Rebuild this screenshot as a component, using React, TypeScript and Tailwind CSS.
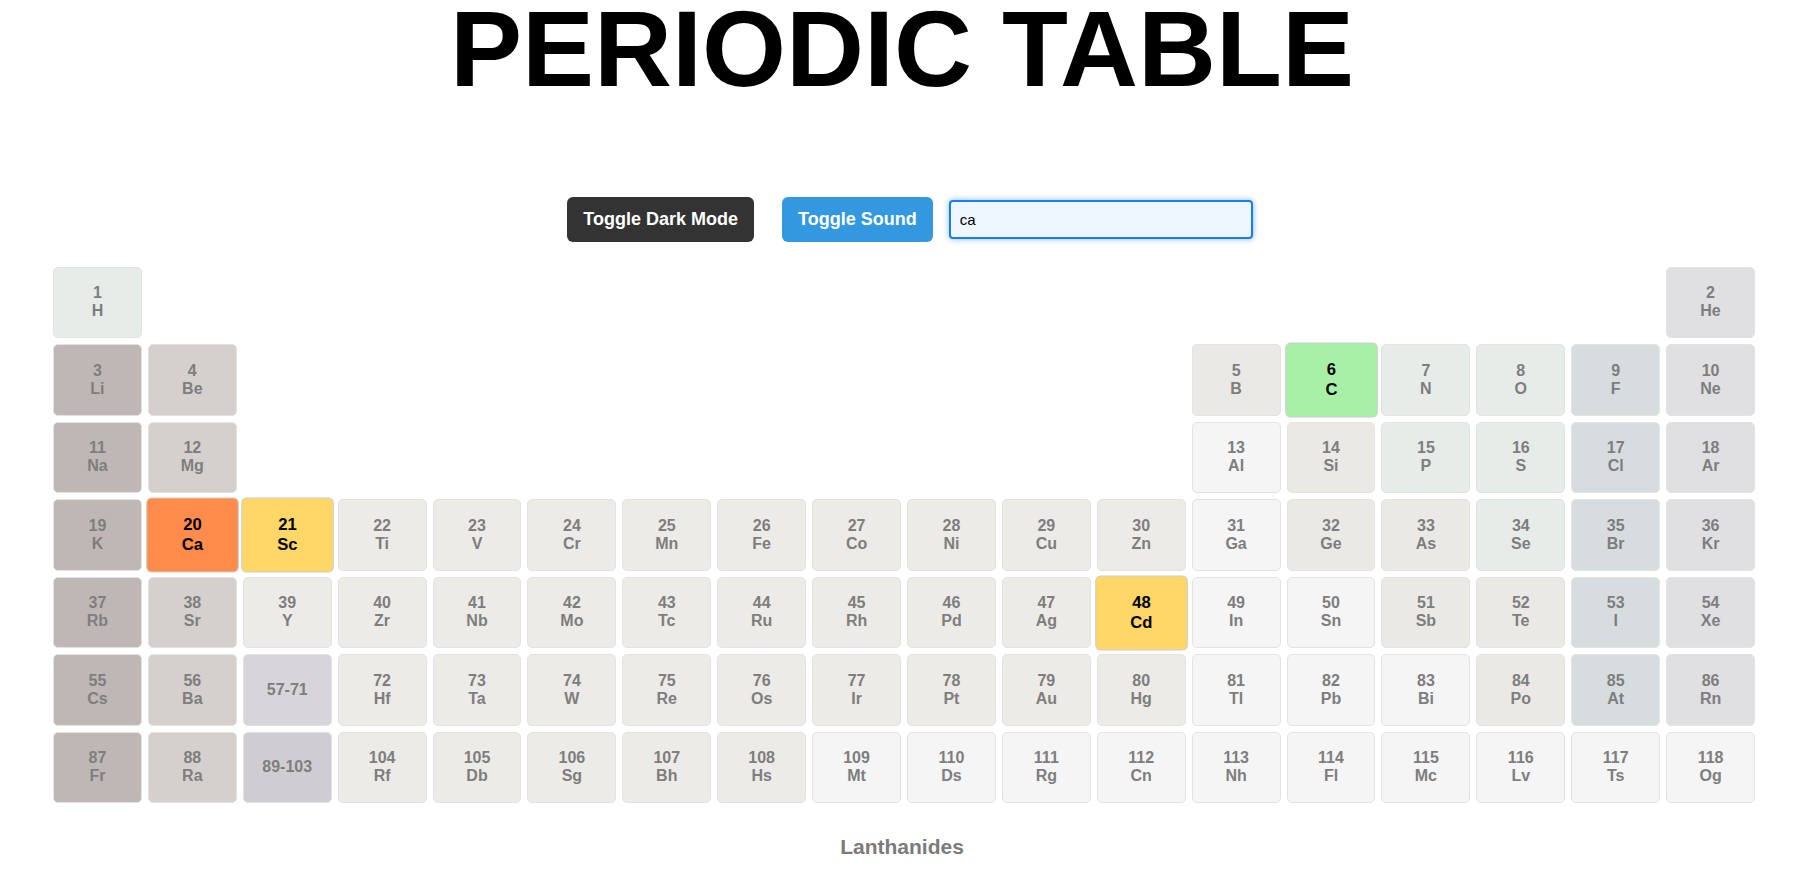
type Cat =
  | "alkali"
  | "alkaline"
  | "transition"
  | "post"
  | "metalloid"
  | "nonmetal"
  | "halogen"
  | "noble"
  | "unknown"
  | "lan"
  | "act";

type Cell = { n: string; s?: string; cat: Cat };

// cores esmaecidas (fora da busca)
const faded: Record<Cat, string> = {
  alkali: "bg-[#bfb7b6]",
  alkaline: "bg-[#d5d0cd]",
  transition: "bg-[#ecebe7]",
  post: "bg-[#f5f5f5]",
  metalloid: "bg-[#ebe9e6]",
  nonmetal: "bg-[#e8ece9]",
  halogen: "bg-[#d7dcdf]",
  noble: "bg-[#e0dfe1]",
  unknown: "bg-[#f5f5f5]",
  lan: "bg-[#d7d5d9]",
  act: "bg-[#cfcdd2]",
};

// cores cheias (resultado da busca)
const full: Partial<Record<Cat, string>> = {
  nonmetal: "bg-[#a8f0a8]",
  alkaline: "bg-[#ff8c4a]",
  transition: "bg-[#fed766]",
};

const symbols =
  "H He Li Be B C N O F Ne Na Mg Al Si P S Cl Ar K Ca Sc Ti V Cr Mn Fe Co Ni Cu Zn Ga Ge As Se Br Kr Rb Sr Y Zr Nb Mo Tc Ru Rh Pd Ag Cd In Sn Sb Te I Xe Cs Ba La Ce Pr Nd Pm Sm Eu Gd Tb Dy Ho Er Tm Yb Lu Hf Ta W Re Os Ir Pt Au Hg Tl Pb Bi Po At Rn Fr Ra Ac Th Pa U Np Pu Am Cm Bk Cf Es Fm Md No Lr Rf Db Sg Bh Hs Mt Ds Rg Cn Nh Fl Mc Lv Ts Og".split(
    " "
  );

function categoria(z: number): Cat {
  if ([3, 11, 19, 37, 55, 87].includes(z)) return "alkali";
  if ([4, 12, 20, 38, 56, 88].includes(z)) return "alkaline";
  if ([1, 6, 7, 8, 15, 16, 34].includes(z)) return "nonmetal";
  if ([9, 17, 35, 53, 85].includes(z)) return "halogen";
  if ([2, 10, 18, 36, 54, 86].includes(z)) return "noble";
  if ([5, 14, 32, 33, 51, 52, 84].includes(z)) return "metalloid";
  if ([13, 31, 49, 50, 81, 82, 83].includes(z)) return "post";
  if (z >= 109) return "unknown";
  return "transition";
}

const matches = [6, 20, 21, 48];

function el(z: number): Cell {
  return { n: String(z), s: symbols[z - 1], cat: categoria(z) };
}

function range(a: number, b: number) {
  const out: Cell[] = [];
  for (let i = a; i <= b; i++) out.push(el(i));
  return out;
}

const cells: Cell[] = [
  ...range(1, 18),
  ...range(19, 36),
  ...range(37, 54),
  el(55),
  el(56),
  { n: "57-71", cat: "lan" },
  ...range(72, 86),
  el(87),
  el(88),
  { n: "89-103", cat: "act" },
  ...range(104, 118),
];

const colStart: Record<string, string> = {
  "2": "col-start-18",
  "5": "col-start-13",
  "13": "col-start-13",
};

function Tile({ cell }: { cell: Cell }) {
  const hit = matches.includes(Number(cell.n)) && !!cell.s;
  const cor = hit ? full[cell.cat] : faded[cell.cat];
  return (
    <div
      className={`flex flex-col items-center justify-center rounded-[5px] border text-[16px] font-bold leading-[1.15] ${cor} ${
        colStart[cell.n] ?? ""
      } ${hit ? "scale-[1.04] border-[#cdcdcd] text-black" : "border-[#e3e3e3] text-[#7e7e7e]"}`}
    >
      <span>{cell.n}</span>
      {cell.s && <span>{cell.s}</span>}
    </div>
  );
}

export default function App() {
  return (
    <div className="h-[873px] overflow-hidden bg-white font-['Liberation_Sans',Arial,sans-serif]">
      {/* Título */}
      <h1 className="text-center text-[108px] font-bold leading-[98px] text-black">
        PERIODIC TABLE
      </h1>

      {/* Controles */}
      <div className="mt-[99px] flex items-center justify-center pl-[16px]">
        <button className="rounded-md bg-[#333333] px-4 py-3 text-[18px] font-bold leading-[1.15] text-white">
          Toggle Dark Mode
        </button>
        <button className="ml-[28px] rounded-md bg-[#3498e0] px-4 py-3 text-[18px] font-bold leading-[1.15] text-white">
          Toggle Sound
        </button>
        <input
          value="ca"
          readOnly
          className="ml-[16px] h-[39px] w-[304px] rounded-[4px] border-2 border-[#1a7cf5] bg-[#eef6ff] px-[9px] text-[15px] text-black shadow-[0_0_6px_rgba(30,130,255,0.55)] outline-none"
        />
      </div>

      {/* Tabela */}
      <div className="mt-[25px] grid grid-cols-[repeat(18,minmax(0,1fr))] auto-rows-[71.5px] gap-[6px] pl-[53px] pr-[49px]">
        {cells.map((c) => (
          <Tile key={c.n} cell={c} />
        ))}
      </div>

      <div className="mt-[28px] text-center text-[21px] font-bold text-[#7b7b7b]">
        Lanthanides
      </div>
    </div>
  );
}
